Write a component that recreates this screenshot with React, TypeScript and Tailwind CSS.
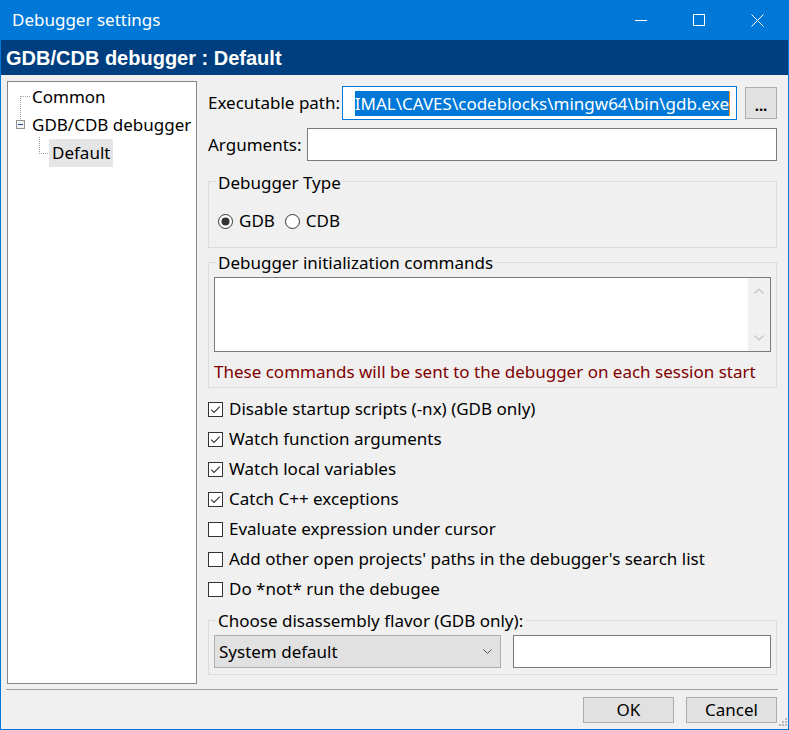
import React from "react";

function Check({ checked }: { checked: boolean }) {
  return (
    <svg width="15" height="15" viewBox="0 0 15 15" className="shrink-0">
      <rect x="0.5" y="0.5" width="14" height="14" fill="#fff" stroke="#333" />
      {checked && <path d="M3.2 7.6 L6 10.4 L11.8 4.6" fill="none" stroke="#333" strokeWidth="1.1" />}
    </svg>
  );
}

function Radio({ checked }: { checked: boolean }) {
  return (
    <svg width="15" height="15" viewBox="0 0 15 15" className="shrink-0">
      <circle cx="7.5" cy="7.5" r="7" fill="#fff" stroke="#333" />
      {checked && <circle cx="7.5" cy="7.5" r="4" fill="#333" />}
    </svg>
  );
}

const checks: [string, boolean][] = [
  ["Disable startup scripts (-nx) (GDB only)", true],
  ["Watch function arguments", true],
  ["Watch local variables", true],
  ["Catch C++ exceptions", true],
  ["Evaluate expression under cursor", false],
  ["Add other open projects' paths in the debugger's search list", false],
  ["Do *not* run the debugee", false],
];

export default function App() {
  return (
    <div className="relative w-[789px] h-[730px] bg-[#0078d7] px-px pb-px flex flex-col font-['Noto_Sans',sans-serif] text-[17px] text-black">
      {/* Title bar */}
      <div className="h-[40px] shrink-0 flex items-center text-white">
        <span className="ml-[11px] text-[17px]">Debugger settings</span>
        <div className="ml-auto mr-[2px] flex h-full">
          <div className="w-[58px] h-full flex items-center justify-center">
            <svg width="12" height="12" viewBox="0 0 12 12">
              <path d="M0 6.5 H12" stroke="#fff" strokeWidth="1" />
            </svg>
          </div>
          <div className="w-[58px] h-full flex items-center justify-center">
            <svg width="12" height="12" viewBox="0 0 12 12">
              <rect x="0.5" y="0.5" width="11" height="11" fill="none" stroke="#fff" strokeWidth="1" />
            </svg>
          </div>
          <div className="w-[58px] h-full flex items-center justify-center">
            <svg width="13" height="13" viewBox="0 0 13 13">
              <path d="M0.5 0.5 L12.5 12.5 M12.5 0.5 L0.5 12.5" stroke="#fff" strokeWidth="1" />
            </svg>
          </div>
        </div>
      </div>

      {/* Content */}
      <div className="relative flex-1 bg-[#f0f0f0] flex flex-col">
        <div className="h-[35px] shrink-0 bg-[#003f7f] text-white flex items-center pl-[5px] font-['Liberation_Sans',Arial,sans-serif] font-bold text-[20px]">
          GDB/CDB debugger : Default
        </div>

        <div className="mt-[6px] ml-[6px] flex">
          {/* Tree */}
          <div className="relative w-[190px] h-[603px] bg-white border border-[#828790]">
            <svg className="absolute left-0 top-0" width="60" height="90" viewBox="0 0 60 90">
              <g stroke="#a0a0a0" strokeWidth="1" strokeDasharray="1 1" fill="none">
                <path d="M13 14.5 H23" />
                <path d="M12.5 14 V38" />
                <path d="M31.5 55 V71" />
                <path d="M31 71.5 H41" />
              </g>
              <rect x="8.5" y="38.5" width="8" height="8" fill="#f4f4f4" stroke="#919191" />
              <path d="M10 42.5 H15" stroke="#1b4f9b" strokeWidth="1" />
            </svg>
            <div className="pt-[1px]">
              <div className="h-[28px] flex items-center pl-[24px]">Common</div>
              <div className="h-[28px] flex items-center pl-[24px]">GDB/CDB debugger</div>
              <div className="h-[28px] flex items-center pl-[41px]">
                <span className="h-[28px] px-[3px] flex items-center bg-[#e5e5e5]">Default</span>
              </div>
            </div>
          </div>

          {/* Right column */}
          <div className="ml-[11px] w-[569px] flex flex-col">
            <div className="mt-[5px] h-[34px] flex items-center">
              <span className="w-[134px]">Executable path:</span>
              <div className="w-[395px] h-[34px] border border-[#0078d7] bg-white flex items-center justify-end pr-[6px] overflow-hidden">
                <span className="bg-[#0078d7] text-white whitespace-nowrap leading-[25px]">IMAL\CAVES\codeblocks\mingw64\bin\gdb.exe</span>
                <span className="w-px h-[25px] bg-[#f7941d] shrink-0" />
              </div>
              <div className="ml-[8px] w-[32px] h-[32px] bg-[#e1e1e1] border border-[#adadad] flex items-center justify-center text-[15px] font-bold leading-none pt-[4px]">
                ...
              </div>
            </div>

            <div className="mt-[8px] h-[33px] flex items-center">
              <span className="w-[99px]">Arguments:</span>
              <div className="w-[470px] h-[33px] border border-[#7a7a7a] bg-white" />
            </div>

            <div className="mt-[20px] border border-[#dcdcdc] pb-[16px]">
              <div className="-mt-[10px] ml-[7px] px-[2px] w-fit bg-[#f0f0f0] leading-[22px]">Debugger Type</div>
              <div className="mt-[17px] h-[20px] flex items-center pl-[9px]">
                <Radio checked={true} />
                <span className="ml-[6px]">GDB</span>
                <span className="ml-[10px] flex"><Radio checked={false} /></span>
                <span className="ml-[6px]">CDB</span>
              </div>
            </div>

            <div className="mt-[14px] border border-[#dcdcdc] px-[5px] pb-[4px]">
              <div className="-mt-[11px] ml-[2px] px-[2px] w-fit bg-[#f0f0f0] leading-[22px]">Debugger initialization commands</div>
              <div className="mt-[3px] h-[75px] border border-[#7a7a7a] bg-white flex justify-end">
                <div className="w-[22px] bg-[#f0f0f0] flex flex-col items-center justify-between py-[10px]">
                  <svg width="10" height="6" viewBox="0 0 10 6">
                    <path d="M0.5 5.5 L5 1 L9.5 5.5" fill="none" stroke="#c2c2c2" strokeWidth="1.2" />
                  </svg>
                  <svg width="10" height="6" viewBox="0 0 10 6">
                    <path d="M0.5 0.5 L5 5 L9.5 0.5" fill="none" stroke="#c2c2c2" strokeWidth="1.2" />
                  </svg>
                </div>
              </div>
              <div className="mt-[9px] leading-[22px] text-[#800000]">These commands will be sent to the debugger on each session start</div>
            </div>

            <div className="mt-[6px] flex flex-col">
              {checks.map(([t, c]) => (
                <div key={t} className="h-[30px] flex items-center gap-[6px]">
                  <Check checked={c} />
                  <span>{t}</span>
                </div>
              ))}
            </div>

            <div className="mt-[16px] border border-[#dcdcdc] px-[5px] pb-[6px]">
              <div className="-mt-[11px] ml-[2px] px-[2px] w-fit bg-[#f0f0f0] leading-[22px]">Choose disassembly flavor (GDB only):</div>
              <div className="mt-[3px] flex gap-[12px]">
                <div className="w-[287px] h-[33px] bg-[#e1e1e1] border border-[#adadad] flex items-center pl-[4px] pr-[8px]">
                  <span>System default</span>
                  <svg className="ml-auto" width="9" height="5" viewBox="0 0 9 5">
                    <path d="M0.5 0.5 L4.5 4.5 L8.5 0.5" fill="none" stroke="#555" strokeWidth="1" />
                  </svg>
                </div>
                <div className="w-[258px] h-[33px] border border-[#7a7a7a] bg-white" />
              </div>
            </div>
          </div>
        </div>

        <div className="mt-[5px] ml-[5px] mr-[10px] h-px bg-[#a0a0a0]" />

        <div className="mt-[7px] flex justify-end gap-[12px] pr-[11px]">
          <div className="w-[91px] h-[26px] bg-[#e1e1e1] border border-[#adadad] flex items-center justify-center">OK</div>
          <div className="w-[91px] h-[26px] bg-[#e1e1e1] border border-[#adadad] flex items-center justify-center">Cancel</div>
        </div>

        <svg className="absolute right-0 bottom-0" width="12" height="12" viewBox="0 0 12 12">
          <g fill="#b8b8b8">
            <rect x="9" y="1" width="2" height="2" />
            <rect x="6" y="4" width="2" height="2" />
            <rect x="9" y="4" width="2" height="2" />
            <rect x="3" y="7" width="2" height="2" />
            <rect x="6" y="7" width="2" height="2" />
            <rect x="9" y="7" width="2" height="2" />
          </g>
        </svg>
      </div>
    </div>
  );
}
